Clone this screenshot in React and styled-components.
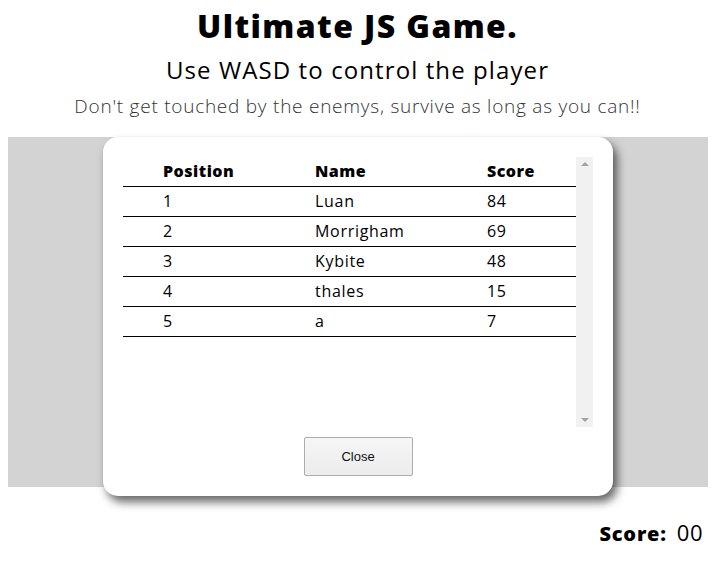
import React from "react";
import styled, { createGlobalStyle } from "styled-components";

const scores = [
  { pos: 1, name: "Luan", score: 84 },
  { pos: 2, name: "Morrigham", score: 69 },
  { pos: 3, name: "Kybite", score: 48 },
  { pos: 4, name: "thales", score: 15 },
  { pos: 5, name: "a", score: 7 },
];

const GlobalStyle = createGlobalStyle`
  body {
    margin: 0;
    background: #fff;
    font-family: "Open Sans", "Noto Sans", sans-serif;
    color: #000;
  }
`;

const App = () => {
  return (
    <Page>
      <GlobalStyle />
      <Header>
        <Title>Ultimate JS Game.</Title>
        <Subtitle>Use WASD to control the player</Subtitle>
        <Hint>Don't get touched by the enemys, survive as long as you can!!</Hint>
      </Header>
      <Stage>
        <Modal>
          <ScrollArea>
            <Table>
              <thead>
                <tr>
                  <Th>Position</Th>
                  <Th>Name</Th>
                  <Th>Score</Th>
                </tr>
              </thead>
              <tbody>
                {scores.map((s) => (
                  <tr key={s.pos}>
                    <Td>{s.pos}</Td>
                    <Td>{s.name}</Td>
                    <Td>{s.score}</Td>
                  </tr>
                ))}
              </tbody>
            </Table>
            <Track>
              <Arrow />
              <Arrow down />
            </Track>
          </ScrollArea>
          <CloseButton>Close</CloseButton>
        </Modal>
      </Stage>
      <ScoreLine>
        <ScoreLabel>Score:</ScoreLabel>
        <ScoreValue>00</ScoreValue>
      </ScoreLine>
    </Page>
  );
};

const Page = styled.div`
  padding: 0 8px;
`;

const Header = styled.header`
  display: flex;
  flex-direction: column;
  align-items: center;
  padding-top: 8px;
  margin-bottom: 19px;
`;

const Title = styled.h1`
  margin: 0;
  font-size: 32px;
  line-height: 36px;
  font-weight: 800;
  letter-spacing: 1.4px;
`;

const Subtitle = styled.h2`
  margin: 12px 0 0;
  font-size: 24px;
  line-height: 28px;
  font-weight: 400;
  letter-spacing: 1.1px;
`;

const Hint = styled.p`
  margin: 10px 0 0;
  font-size: 19px;
  line-height: 24px;
  font-weight: 300;
  letter-spacing: 0.75px;
  color: #333;
`;

const Stage = styled.div`
  position: relative;
  width: 700px;
  height: 350px;
  background: #d3d3d3;
`;

const Modal = styled.div`
  position: absolute;
  left: 95px;
  top: 0;
  width: 470px;
  padding: 20px;
  background: #fff;
  border-radius: 15px;
  box-shadow: 4px 6px 10px rgba(0, 0, 0, 0.6);
  display: flex;
  flex-direction: column;
  align-items: center;
  gap: 10px;
`;

const ScrollArea = styled.div`
  display: flex;
  width: 100%;
  height: 270px;
`;

const Table = styled.table`
  width: 453px;
  border-collapse: collapse;
  align-self: flex-start;
  font-size: 16px;
  line-height: 29px;

  th:nth-child(1),
  td:nth-child(1) {
    width: 112px;
  }
  th:nth-child(2),
  td:nth-child(2) {
    width: 132px;
  }
`;

const Th = styled.th`
  height: 29px;
  padding: 0 0 0 40px;
  text-align: left;
  font-weight: 800;
  letter-spacing: 0.5px;
  border-bottom: 1px solid #000;
`;

const Td = styled.td`
  height: 29px;
  padding: 0 0 0 40px;
  letter-spacing: 0.7px;
  border-bottom: 1px solid #000;
`;

const Track = styled.div`
  width: 17px;
  margin-left: auto;
  background: #f1f1f1;
  display: flex;
  flex-direction: column;
  justify-content: space-between;
  align-items: center;
  padding: 5px 0;
`;

const Arrow = styled.span`
  width: 0;
  height: 0;
  border-left: 4px solid transparent;
  border-right: 4px solid transparent;
  ${({ down }) =>
    down ? "border-top: 4px solid #a3a3a3;" : "border-bottom: 4px solid #a3a3a3;"}
`;

const CloseButton = styled.button`
  width: 109px;
  height: 39px;
  background: linear-gradient(#f6f6f6, #ececec);
  border: 1px solid #adadad;
  border-radius: 2px;
  font-family: "Liberation Sans", Arial, sans-serif;
  font-size: 13px;
  color: #111;
`;

const ScoreLine = styled.div`
  display: flex;
  justify-content: flex-end;
  align-items: baseline;
  gap: 10px;
  margin-top: 30px;
  padding-right: 4px;
`;

const ScoreLabel = styled.span`
  font-size: 20px;
  font-weight: 800;
  letter-spacing: 0.8px;
`;

const ScoreValue = styled.span`
  font-size: 22px;
  font-weight: 400;
  letter-spacing: 0.5px;
`;

export default App;
